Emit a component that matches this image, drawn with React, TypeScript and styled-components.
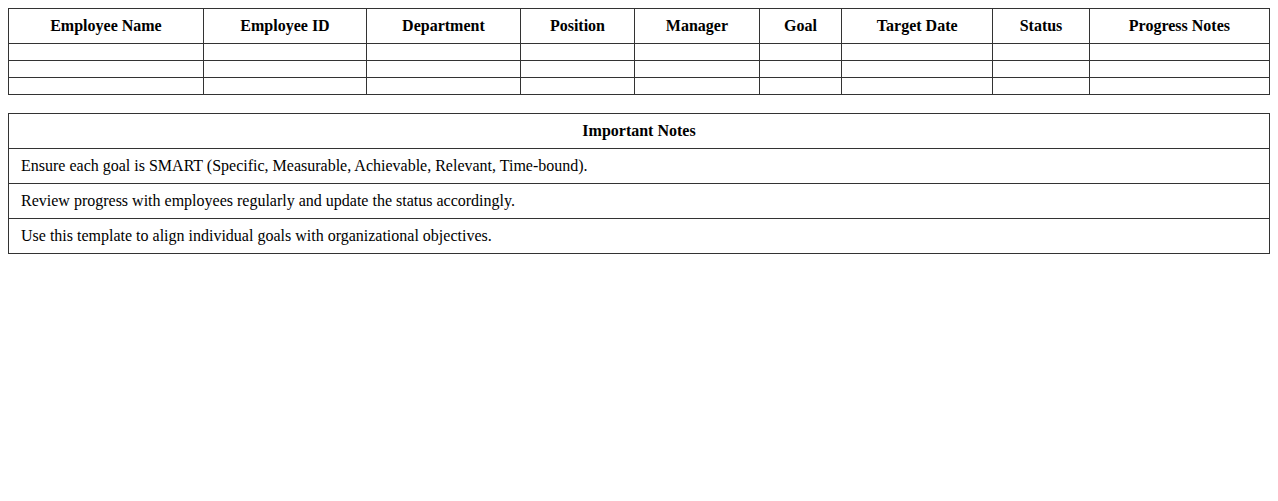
import styled, { createGlobalStyle } from "styled-components";

const GlobalStyle = createGlobalStyle`
    body {
        margin: 8px;
        font-family: "Liberation Serif", "Times New Roman", serif;
        font-size: 16px;
        color: #000;
        background: #fff;
    }
`

const Table = styled.table`
    width: 100%;
    border-collapse: collapse;
    margin-bottom: 18px;
`

const HeadCell = styled.th`
    border: 1px solid #333;
    padding: 8px 12px;
    font-weight: bold;
    text-align: center;
`

const Cell = styled.td`
    border: 1px solid #333;
    padding: 8px 12px;
    text-align: left;
`

const columns = [
    "Employee Name",
    "Employee ID",
    "Department",
    "Position",
    "Manager",
    "Goal",
    "Target Date",
    "Status",
    "Progress Notes",
];

const notes = [
    "Ensure each goal is SMART (Specific, Measurable, Achievable, Relevant, Time-bound).",
    "Review progress with employees regularly and update the status accordingly.",
    "Use this template to align individual goals with organizational objectives.",
];

const App = (): JSX.Element => {
    return (
        <>
            <GlobalStyle />
            <Table>
                <thead>
                    <tr>
                        {columns.map((col) => (
                            <HeadCell key={col}>{col}</HeadCell>
                        ))}
                    </tr>
                </thead>
                <tbody>
                    {[0, 1, 2].map((row) => (
                        <tr key={row}>
                            {columns.map((col) => (
                                <Cell key={col}></Cell>
                            ))}
                        </tr>
                    ))}
                </tbody>
            </Table>
            <Table>
                <thead>
                    <tr>
                        <HeadCell>Important Notes</HeadCell>
                    </tr>
                </thead>
                <tbody>
                    {notes.map((note) => (
                        <tr key={note}>
                            <Cell>{note}</Cell>
                        </tr>
                    ))}
                </tbody>
            </Table>
        </>
    )
}

export default App;
